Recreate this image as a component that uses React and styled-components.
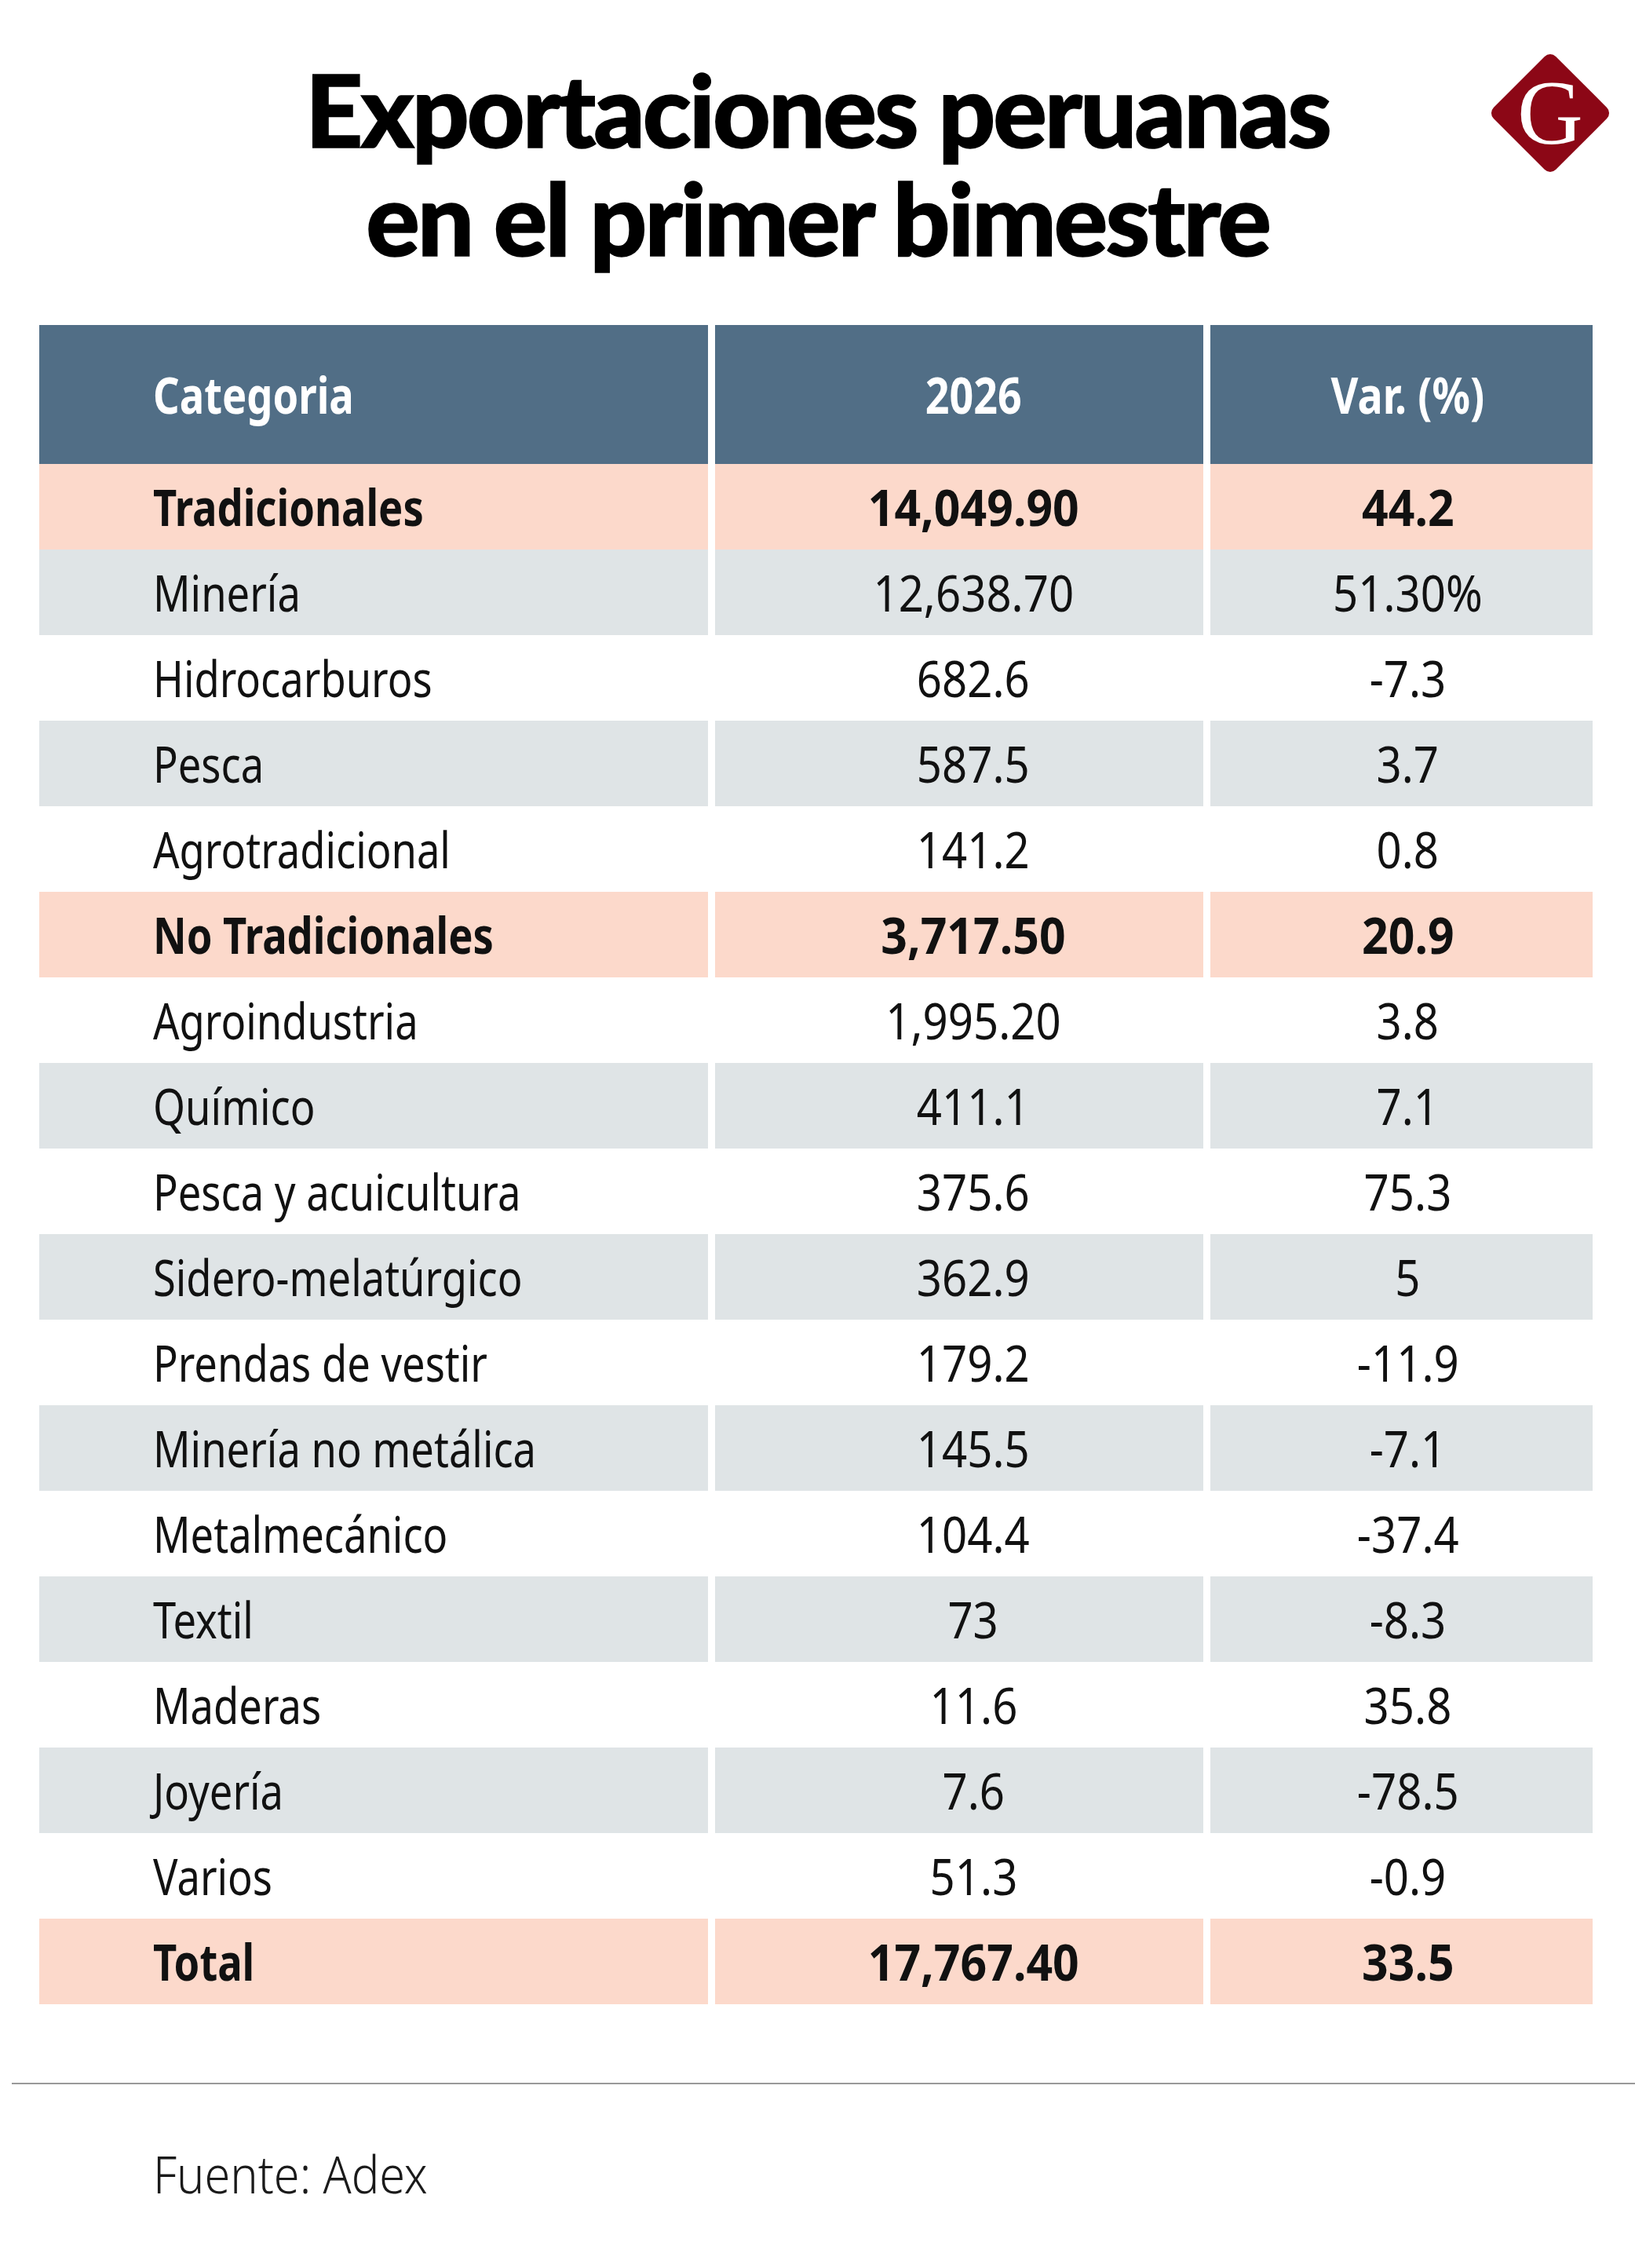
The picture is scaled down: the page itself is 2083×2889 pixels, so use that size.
import React from 'react';
import styled, { createGlobalStyle } from 'styled-components';

const GlobalStyle = createGlobalStyle`
  html, body {
    margin: 0;
    padding: 0;
    background: #ffffff;
  }
  body {
    font-family: 'Noto Sans', 'Open Sans', 'DejaVu Sans', sans-serif;
    color: #111111;
  }
`;

const Page = styled.div`
  width: 2083px;
  height: 2889px;
  background: #ffffff;
  box-sizing: border-box;
  overflow: hidden;
`;

const Header = styled.header`
  display: grid;
  grid-template-columns: 1fr auto 1fr;
  align-items: start;
  padding-top: 70px;
  height: 414px;
  box-sizing: border-box;
`;

const Title = styled.h1`
  grid-column: 2;
  margin: 0;
  font-family: 'Lato', 'Open Sans', sans-serif;
  font-weight: 900;
  font-size: 128px;
  line-height: 138px;
  letter-spacing: -3px;
  text-align: center;
  color: #000000;
  -webkit-text-stroke: 1.5px #000000;
`;

const Logo = styled.div`
  grid-column: 3;
  justify-self: end;
  margin-top: -6px;
  margin-right: 28px;
  width: 160px;
  height: 160px;
`;

const Table = styled.div`
  display: grid;
  grid-template-columns: 852px 622px 487px;
  column-gap: 9px;
  margin-left: 50px;
  width: 1979px;
`;

const rowColors = {
  head: '#516e86',
  group: '#fcd9cb',
  shade: '#dfe4e6',
  plain: '#ffffff',
};

const Cell = styled.div`
  display: flex;
  align-items: center;
  justify-content: ${(p) => (p.$first ? 'flex-start' : 'center')};
  padding-left: ${(p) => p.$indent}px;
  height: ${(p) => (p.$kind === 'head' ? '177px' : '109px')};
  box-sizing: border-box;
  background: ${(p) => rowColors[p.$kind]};
  color: ${(p) => (p.$kind === 'head' ? '#ffffff' : '#111111')};
  font-size: 64px;
  font-weight: ${(p) => (p.$kind === 'head' || p.$kind === 'group' ? 700 : 400)};
  white-space: nowrap;
`;

/* the source face is a condensed sans; squeeze the wide one we have */
const Label = styled.span`
  display: inline-block;
  transform: scaleX(${(p) => p.$squeeze});
  transform-origin: ${(p) => (p.$first ? 'left center' : 'center center')};
`;

const Rule = styled.hr`
  margin: 100px 0 0 15px;
  border: none;
  border-top: 2px solid #9a9a9a;
  height: 0;
`;

const Source = styled.p`
  margin: 68px 0 0 195px;
  font-size: 66px;
  font-weight: 300;
  color: #1a1a1a;

  span {
    display: inline-block;
    transform: scaleX(0.9);
    transform-origin: left center;
  }
`;

const rows = [
  ['Tradicionales', '14,049.90', '44.2', 'group'],
  ['Minería', '12,638.70', '51.30%', 'shade'],
  ['Hidrocarburos', '682.6', '-7.3', 'plain'],
  ['Pesca', '587.5', '3.7', 'shade'],
  ['Agrotradicional', '141.2', '0.8', 'plain'],
  ['No Tradicionales', '3,717.50', '20.9', 'group'],
  ['Agroindustria', '1,995.20', '3.8', 'plain'],
  ['Químico', '411.1', '7.1', 'shade'],
  ['Pesca y acuicultura', '375.6', '75.3', 'plain'],
  ['Sidero-melatúrgico', '362.9', '5', 'shade'],
  ['Prendas de vestir', '179.2', '-11.9', 'plain'],
  ['Minería no metálica', '145.5', '-7.1', 'shade'],
  ['Metalmecánico', '104.4', '-37.4', 'plain'],
  ['Textil', '73', '-8.3', 'shade'],
  ['Maderas', '11.6', '35.8', 'plain'],
  ['Joyería', '7.6', '-78.5', 'shade'],
  ['Varios', '51.3', '-0.9', 'plain'],
  ['Total', '17,767.40', '33.5', 'group'],
];

const GestionLogo = () => (
  <svg width="160" height="160" viewBox="0 0 160 160">
    <rect
      x="24"
      y="24"
      width="112"
      height="112"
      rx="10"
      fill="#8c0716"
      transform="rotate(45 80 80)"
    />
    <text
      x="80"
      y="119"
      textAnchor="middle"
      fill="#ffffff"
      fontFamily="'Liberation Serif', 'DejaVu Serif', serif"
      fontSize="116"
    >
      G
    </text>
  </svg>
);

const Row = ({ kind, cells }) => {
  const numSqueeze = kind === 'group' ? 0.92 : 0.88;
  return (
    <>
      <Cell $kind={kind} $first $indent={145}>
        <Label $first $squeeze={0.82}>{cells[0]}</Label>
      </Cell>
      <Cell $kind={kind} $indent={36}>
        <Label $squeeze={kind === 'head' ? 0.84 : numSqueeze}>{cells[1]}</Label>
      </Cell>
      <Cell $kind={kind} $indent={16}>
        <Label $squeeze={kind === 'head' ? 0.84 : numSqueeze}>{cells[2]}</Label>
      </Cell>
    </>
  );
};

const App = () => {
  return (
    <Page>
      <GlobalStyle />
      <Header>
        <Title>
          Exportaciones peruanas
          <br />
          en el primer bimestre
        </Title>
        <Logo>
          <GestionLogo />
        </Logo>
      </Header>

      <Table>
        <Row kind="head" cells={['Categoria', '2026', 'Var. (%)']} />
        {rows.map(([name, value, change, kind]) => (
          <Row key={name} kind={kind} cells={[name, value, change]} />
        ))}
      </Table>

      <Rule />
      <Source>
        <span>Fuente: Adex</span>
      </Source>
    </Page>
  );
};

export default App;
